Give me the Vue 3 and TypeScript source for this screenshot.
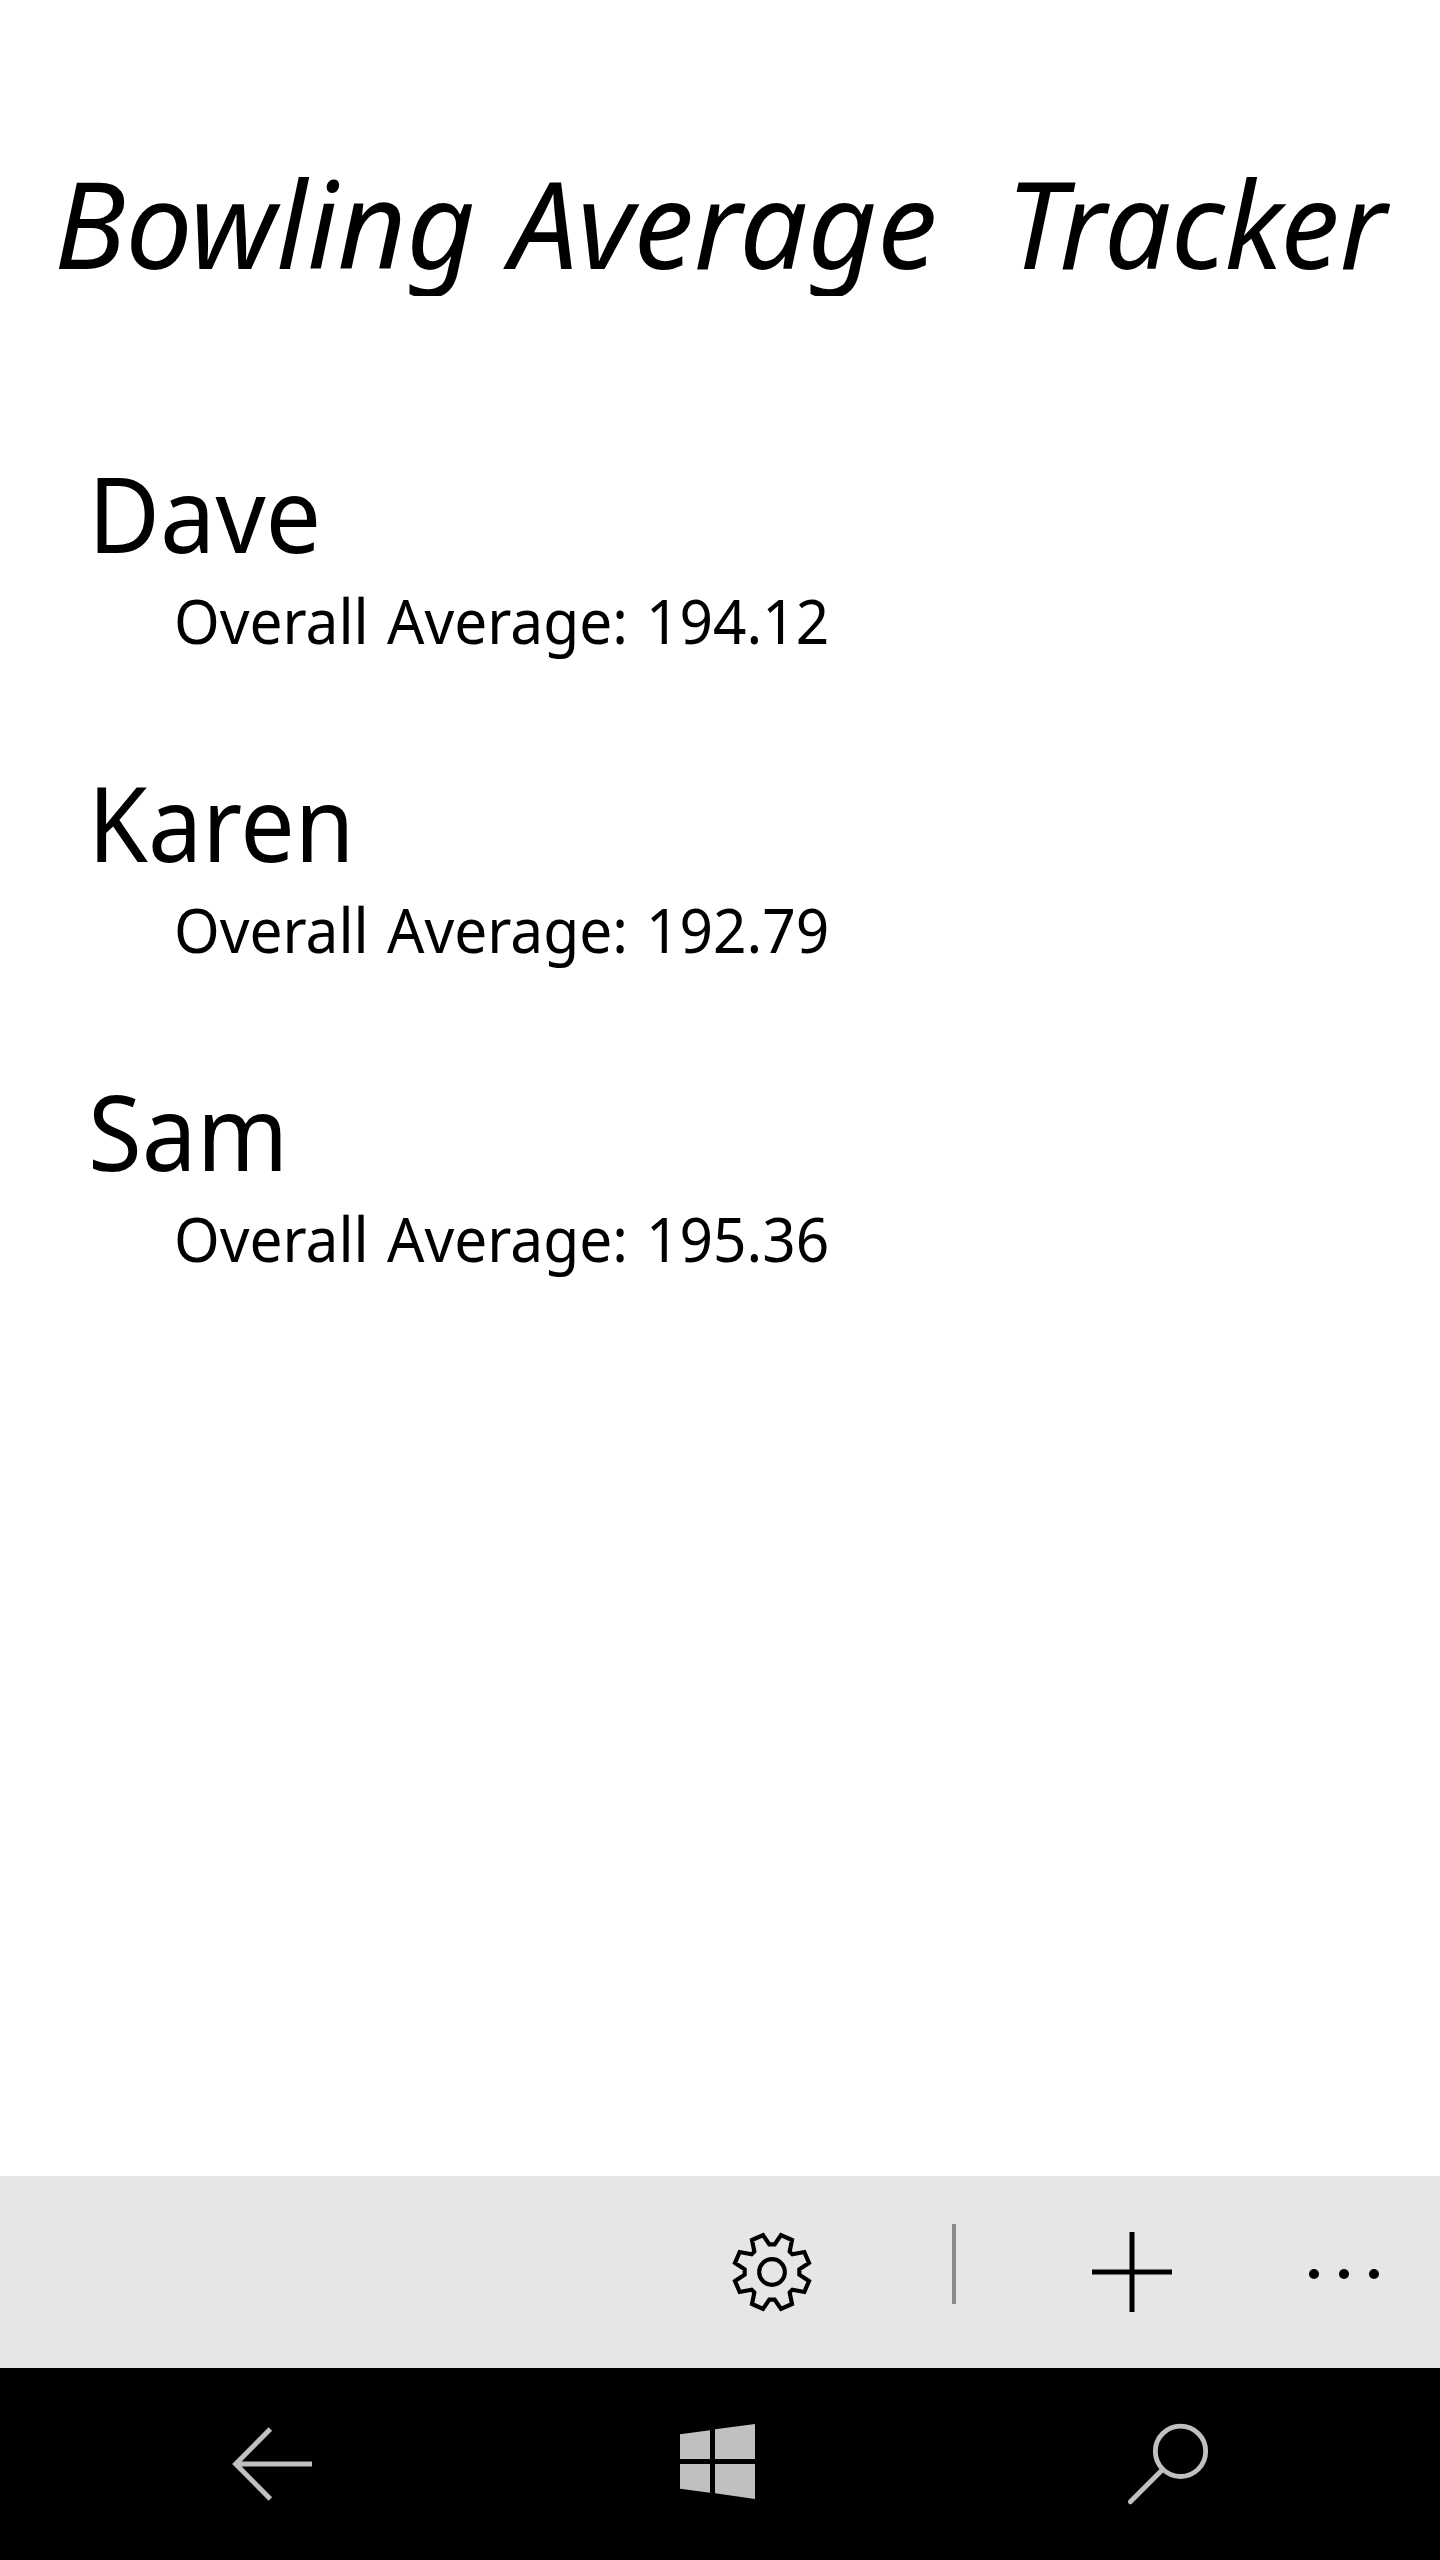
<script setup lang="ts">
interface Bowler {
  name: string
  average: string
}

const titleWords: string[] = ['Bowling', 'Average', 'Tracker']

const bowlers: Bowler[] = [
  { name: 'Dave', average: '194.12' },
  { name: 'Karen', average: '192.79' },
  { name: 'Sam', average: '195.36' },
]
</script>

<template>
  <div class="phone">
    <h1 class="title">
      <span v-for="word in titleWords" :key="word" class="word" :class="`t-${word.toLowerCase()}`">{{ word }}</span>
    </h1>

    <main class="list">
      <section v-for="b in bowlers" :key="b.name" class="bowler">
        <h2 class="name" :class="`n-${b.name.toLowerCase()}`">{{ b.name }}</h2>
        <p class="score">
          <span class="w-overall">Overall</span>
          <span class="w-average">Average:</span>
          <span class="w-value">{{ b.average }}</span>
        </p>
      </section>
    </main>

    <footer class="appbar">
      <svg class="gear" viewBox="0 0 390 390" fill="none" stroke="#000" stroke-width="12.5">
        <path d="M178 103H194L213 75L246 90L239 125L247 133L283 126L297 159L268 178V194L297 213L283 246L247 239L239 247L246 282L213 297L194 269H178L159 297L126 282L133 247L125 239L89 246L75 213L104 194V178L75 159L89 126L125 133L133 125L126 90L159 75Z" />
        <circle cx="186" cy="186" r="38.5" />
      </svg>
      <span class="separator"></span>
      <svg class="plus" viewBox="0 0 80 80" fill="none" stroke="#000" stroke-width="5">
        <path d="M0 40H80M40 0V80" />
      </svg>
      <svg class="more" viewBox="0 0 70 10">
        <circle cx="5" cy="5" r="5" /><circle cx="35" cy="5" r="5" /><circle cx="65" cy="5" r="5" />
      </svg>
    </footer>

    <nav class="navbar">
      <svg class="back" viewBox="0 0 390 390" fill="none" stroke="#c0c0c0" stroke-width="15">
        <path d="M181 87L77 192L181 297M80 192H306" />
      </svg>
      <svg class="start" viewBox="0 0 360 360" fill="#c0c0c0">
        <path d="M60 103L150 91V177H60ZM165 88L285 72V177H165ZM60 192H150V278L60 266ZM165 192H285V297L165 280Z" />
      </svg>
      <svg class="search" viewBox="0 0 360 360" fill="none" stroke="#c0c0c0" stroke-width="14.5" stroke-linecap="round">
        <circle cx="211.5" cy="154" r="75.5" />
        <path d="M157 209L61 305" />
      </svg>
    </nav>
  </div>
</template>

<style>
body {
  margin: 0;
  background: #fff;
}
</style>

<style scoped>
.phone {
  width: 1440px;
  height: 2560px;
  display: flex;
  flex-direction: column;
  background: #fff;
  color: #000;
  font-family: "Noto Sans", "Open Sans", sans-serif;
  overflow: hidden;
}

.title {
  margin: 136px 0 0;
  padding-left: 54px;
  height: 160px;
  line-height: 172px;
  display: flex;
  overflow: hidden;
  font-size: 121px;
  font-weight: 400;
  font-style: italic;
  white-space: nowrap;
}

.word {
  flex: none;
  transform-origin: 0 0;
  transform: scaleX(0.984);
}

.t-bowling {
  width: 456px;
}

.t-average {
  width: 496px;
  transform: scaleX(0.994);
}

.t-tracker {
  transform: scaleX(0.976);
}

.list {
  flex: 1;
  padding: 151px 0 0 88px;
}

.bowler {
  height: 309px;
}

.name {
  margin: 0;
  height: 126px;
  line-height: 132px;
  font-size: 103.6px;
  font-weight: 400;
  transform-origin: 0 0;
}

.n-dave {
  transform: scaleX(0.953);
}

.n-karen {
  transform: scaleX(0.934);
}

.n-sam {
  transform: scaleX(0.945);
}

.score {
  margin: 0;
  padding-left: 86px;
  height: 90px;
  line-height: 94px;
  display: flex;
  font-size: 61.3px;
  white-space: nowrap;
}

.score span {
  flex: none;
  transform-origin: 0 0;
  transform: scaleX(0.956);
}

.w-overall {
  width: 213px;
}

.w-average {
  width: 259px;
}

.appbar {
  flex: none;
  height: 192px;
  background: #e6e6e6;
  display: flex;
  align-items: center;
  padding-left: 710px;
}

.gear {
  width: 130px;
  height: 130px;
  margin-top: 6px;
}

.separator {
  width: 4px;
  height: 80px;
  margin: 0 136px 16px 112px;
  background: #8a8a8a;
}

.plus {
  width: 80px;
  height: 80px;
}

.more {
  width: 70px;
  height: 10px;
  margin: 4px 0 0 137px;
}

.navbar {
  flex: none;
  height: 192px;
  background: #000;
  display: flex;
  padding-left: 210px;
}

.navbar svg {
  margin-top: 32px;
}

.back {
  width: 130px;
  height: 130px;
}

.start {
  width: 120px;
  height: 120px;
  margin-left: 320px;
}

.search {
  width: 120px;
  height: 120px;
  margin-left: 330px;
}
</style>
